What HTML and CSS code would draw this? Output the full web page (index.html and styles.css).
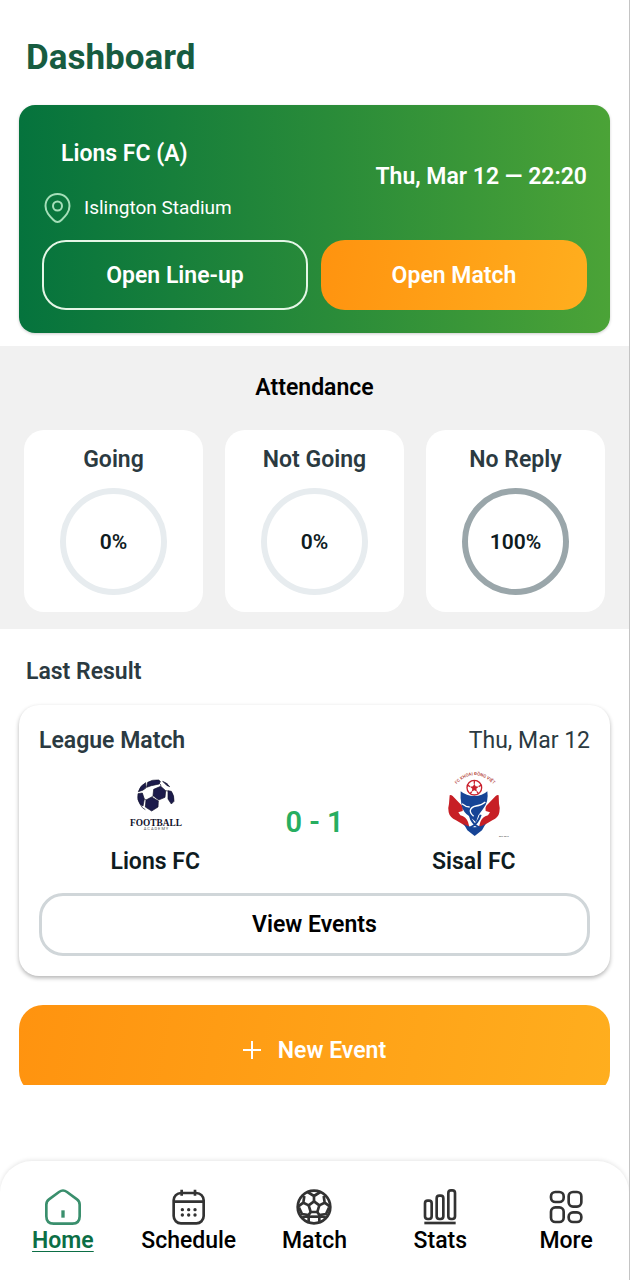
FILE: index.html
```html
<!DOCTYPE html>
<html lang="en">
<head>
    <meta charset="UTF-8">
    <meta name="viewport" content="width=device-width, initial-scale=1.0">
    <title>Dashboard</title>
    <link rel="stylesheet" href="styles.css">
</head>
<body>

    <main class="content">
        <h1 class="page-title">Dashboard</h1>

        <section class="match-card">
            <div class="match-info">
                <div>
                    <h2 class="match-team">Lions FC (A)</h2>
                    <p class="match-place">
                        <svg class="pin" viewBox="0 0 30 32" aria-hidden="true">
                            <path d="M15 2C8 2 3 7 3 14c0 6 4 10 8 14 2.500 2.500 5.500 2.500 8 0 4-4 8-8 8-14C27 7 22 2 15 2z"/>
                            <circle cx="15" cy="14" r="4.500"/>
                        </svg>
                        Islington Stadium
                    </p>
                </div>
                <time class="match-time">Thu, Mar 12 — 22:20</time>
            </div>
            <div class="match-actions">
                <button class="button outline">Open Line-up</button>
                <button class="button orange">Open Match</button>
            </div>
        </section>

        <section class="attendance">
            <h2 class="attendance-title">Attendance</h2>
            <div class="attendance-grid">
                <div class="attendance-card">
                    <h3 class="attendance-label">Going</h3>
                    <div class="ring">0%</div>
                </div>
                <div class="attendance-card">
                    <h3 class="attendance-label">Not Going</h3>
                    <div class="ring">0%</div>
                </div>
                <div class="attendance-card">
                    <h3 class="attendance-label">No Reply</h3>
                    <div class="ring full">100%</div>
                </div>
            </div>
        </section>

        <h2 class="section-title">Last Result</h2>

        <section class="result-card">
            <div class="result-head">
                <h3 class="result-type">League Match</h3>
                <time>Thu, Mar 12</time>
            </div>
            <div class="result-teams">
                <div class="team">
                    <svg class="team-logo" viewBox="27 9 216 210" role="img" aria-label="Lions FC logo">
                        <g fill="#1c1b4b" stroke="#11112b" stroke-width="2" stroke-linejoin="round">
                            <path d="M113 52q14-9 33-7l5 4-3 8-24 5-14 5z"/>
                            <path d="M107 53q-17 9-22 27l15-5 8-9z"/>
                            <path d="M84 86l13-2 6 18-4 21-8-4q-11-15-7-33z"/>
                            <path d="M131 73l21-9 15 13-2 20-19 8-17-13z"/>
                            <path d="M108 105l17-9 20 12-1 18-19 12-19-12z"/>
                            <path d="M174 77l10 2q9 12 8 30l-8 8-10-15z"/>
                            <path d="M158 49q13 4 21 16l-9-4z"/>
                        </g>
                        <path d="M104 73l5-6M103 102l6 3M126 96l4-5M151 57l2 7M167 77l7 1M92 121q5 9 14 13" fill="none" stroke="#11112b" stroke-width="2"/>
                        <text class="logo-name" x="138" y="182" text-anchor="middle">FOOTBALL</text>
                        <text class="logo-sub" x="138" y="196" text-anchor="middle">A C A D E M Y</text>
                    </svg>
                    <span class="team-name">Lions FC</span>
                </div>
                <strong class="score">0 - 1</strong>
                <div class="team">
                    <svg class="team-logo" viewBox="24 9 216 210" role="img" aria-label="Sisal FC logo">
                        <path id="arc" d="M80 57Q134 4 190 57" fill="none"/>
                        <text class="logo-arc"><textPath href="#arc" startOffset="50%" text-anchor="middle">FC KHOAI ĐỒNG VIỆT</textPath></text>
                        <circle cx="133" cy="68" r="22" fill="#fff" stroke="#c9202c" stroke-width="4"/>
                        <path d="M133 56l4 8 9 1-7 6 2 9-8-4-8 4 2-9-7-6 9-1z" fill="#c9202c"/>
                        <path d="M133 46v10M146 65l8-5M141 80l5 7M125 80l-5 7M120 65l-8-5" stroke="#c9202c" stroke-width="4"/>
                        <path d="M59 91q3-3 9 2l28 29q5 8 2 16l-13 4 6 9q18 5 23 20l6 22q-22-16-42-27-19-9-22-24-3-13 1-26z" fill="#c71f25"/>
                        <path d="M206 91q-3-3-9 2l-28 29q-5 8-2 16l13 4-6 9q-18 5-23 20l-6 22q22-16 42-27 19-9 21-24 3-13-1-26z" fill="#c71f25"/>
                        <path d="M92 79q17 14 41 14t39-14q5 32-13 53l-14 19-7 21-20-18q-18-12-23-32-5-22-3-43z" fill="#164496"/>
                        <path d="M100 175q11 11 34 12 22-1 34-12l-12 21-22 17-22-17z" fill="#164496"/>
                        <path d="M119 149q6 28 30 39M152 149q-7 27-32 39" fill="none" stroke="#164496" stroke-width="6"/>
                        <path d="M166 111q-11 10-28 12-15 3-17 13-1 8 10 18M96 116q12 10 23 10" fill="none" stroke="#fff" stroke-width="4"/>
                        <text class="logo-tiny" x="207" y="217">EST 2016</text>
                    </svg>
                    <span class="team-name">Sisal FC</span>
                </div>
            </div>
            <button class="button gray">View Events</button>
        </section>

        <button class="button orange new-event">
            <svg class="plus" viewBox="0 0 18 18" aria-hidden="true"><path d="M9 0v18M0 9h18"/></svg>
            New Event
        </button>
    </main>

    <nav class="tabbar">
        <a class="tab active" href="#home">
            <svg class="tab-icon" viewBox="0 0 108 108" aria-hidden="true">
                <path d="M4 47Q4 37 12 31L42 9Q54 0 66 9L96 31Q104 37 104 47V82Q104 104 82 104H26Q4 104 4 82z"/>
                <path class="door" d="M54 64v22"/>
            </svg>
            Home
        </a>
        <a class="tab" href="#schedule">
            <svg class="tab-icon" viewBox="0 0 108 108" aria-hidden="true">
                <rect x="8" y="12" width="90" height="91" rx="22"/>
                <path d="M8 38h90M32 2v18M72 2v18"/>
                <path class="dots" d="M34 62h.1M53 62h.1M72 62h.1M34 78h.1M53 78h.1M72 78h.1"/>
            </svg>
            Schedule
        </a>
        <a class="tab" href="#match">
            <svg class="tab-icon" viewBox="0 0 108 108" aria-hidden="true">
                <circle cx="54" cy="54" r="49"/>
                <path d="M54 37l16 12-6 20H44l-6-20z"/>
                <path d="M54 37V21L35 9M54 21L73 9M70 49l16-8-3-20M86 41l16 12M64 69l6 9 20-3 9-19M70 78v23M70 78l20 8M44 69l-6 9-20-3-9-19M38 78v23M38 78l-20 8M38 49l-16-8 3-20M22 41L6 53"/>
                <path d="M38 83h32"/>
            </svg>
            Match
        </a>
        <a class="tab" href="#stats">
            <svg class="tab-icon" viewBox="0 0 108 108" aria-hidden="true">
                <rect x="9" y="35" width="20" height="55" rx="8"/>
                <rect x="44" y="20" width="20" height="70" rx="8"/>
                <rect x="79" y="4" width="20" height="86" rx="8"/>
                <path d="M7 102h94"/>
            </svg>
            Stats
        </a>
        <a class="tab" href="#more">
            <svg class="tab-icon" viewBox="0 0 108 108" aria-hidden="true">
                <rect x="9" y="9" width="38" height="30" rx="13"/>
                <rect x="62" y="9" width="38" height="44" rx="13"/>
                <rect x="9" y="55" width="38" height="44" rx="13"/>
                <rect x="62" y="70" width="38" height="29" rx="13"/>
            </svg>
            More
        </a>
    </nav>

</body>
</html>
```

FILE: styles.css
```css
* {
    margin: 0;
    padding: 0;
    box-sizing: border-box;
}

body {
    display: flex;
    flex-direction: column;
    gap: 76px;
    height: 100vh;
    border-right: 1px solid #c4c4c4;
    background-color: #fff;
    font-family: Roboto, "Liberation Sans", sans-serif;
    font-size: 23px;
    line-height: 28px;
    color: #0f1c1f;
}

h2,
h3 {
    font-size: 23px;
    font-weight: 600;
}

.content {
    flex: 1;
    min-height: 0;
    overflow: hidden;
}

.page-title {
    padding: 36px 26px 25px;
    font-size: 35px;
    line-height: 44px;
    font-weight: 700;
    color: #175c40;
}

/* Next match */
.match-card {
    margin: 0 19px 13px;
    padding: 35px 23px 23px;
    border-radius: 16px;
    background: linear-gradient(90deg, #05733d, #298b39 52%, #4ba337);
    box-shadow: 0 1px 3px rgba(0, 0, 0, 0.2);
    color: #fff;
}

.match-info {
    display: flex;
    justify-content: space-between;
    align-items: center;
    margin-bottom: 16px;
}

.match-team {
    margin-bottom: 24px;
    padding-left: 19px;
}

.match-place {
    display: flex;
    align-items: center;
    gap: 11px;
    font-size: 19px;
}

.pin {
    width: 31px;
    height: 32px;
    fill: none;
    stroke: #a5dfb9;
    stroke-width: 2;
}

.match-time {
    padding-bottom: 10px;
    font-weight: 600;
}

.match-actions {
    display: grid;
    grid-template-columns: 1fr 1fr;
    gap: 13px;
}

.button {
    height: 70px;
    border: none;
    border-radius: 24px;
    font-family: inherit;
    font-size: 23px;
    font-weight: 600;
    color: #fff;
    cursor: pointer;
}

.button.outline {
    border: 2px solid #e4f6e6;
    background: none;
}

.button.orange {
    background: linear-gradient(100deg, #ff930f, #ffae1e);
}

.button.gray {
    width: 100%;
    height: 63px;
    border: 3px solid #d0d6d9;
    background-color: #fff;
    color: #000;
}

/* Attendance */
.attendance {
    padding: 28px 24px 17px;
    background-color: #f1f1f1;
}

.attendance-title {
    margin-bottom: 28px;
    text-align: center;
    color: #000;
}

.attendance-grid {
    display: grid;
    grid-template-columns: repeat(3, 1fr);
    gap: 22px;
}

.attendance-card {
    display: flex;
    flex-direction: column;
    align-items: center;
    gap: 14px;
    padding: 16px 0 17px;
    border-radius: 20px;
    background-color: #fff;
}

.attendance-label,
.section-title,
.result-type {
    color: #2b3a41;
}

.ring {
    display: flex;
    justify-content: center;
    align-items: center;
    width: 107px;
    height: 107px;
    border: 6px solid #e7ecef;
    border-radius: 50%;
    font-size: 21px;
    font-weight: 600;
}

.ring.full {
    border-color: #9aa6aa;
}

/* Last result */
.section-title {
    padding: 29px 26px 19px;
}

.result-card {
    margin: 0 19px 29px;
    padding: 22px 20px 20px;
    border-radius: 20px;
    background-color: #fff;
    box-shadow: 0 2px 4px rgba(0, 0, 0, 0.3);
}

.result-head {
    display: flex;
    justify-content: space-between;
    color: #2b3a41;
}

.result-teams {
    display: grid;
    grid-template-columns: 1fr auto 1fr;
    column-gap: 14px;
    align-items: center;
    margin: 13px 0 17px;
}

.team {
    display: flex;
    flex-direction: column;
    align-items: center;
    gap: 10px;
}

.team-logo {
    width: 72px;
    height: 70px;
}

.team-name {
    font-weight: 600;
}

.score {
    font-size: 29px;
    font-weight: 600;
    color: #27ae60;
}

.logo-name {
    font-family: "Liberation Serif", serif;
    font-size: 28px;
    font-weight: bold;
    fill: #11112b;
}

.logo-sub {
    font-size: 12px;
    fill: #555;
}

.logo-arc {
    font-size: 13px;
    font-weight: 600;
    fill: #b5493f;
}

.logo-tiny {
    font-size: 7px;
    fill: #333;
}

.new-event {
    display: flex;
    justify-content: center;
    align-items: center;
    gap: 17px;
    width: calc(100% - 38px);
    height: 90px;
    margin: 0 19px;
}

.plus {
    width: 18px;
    height: 18px;
    fill: none;
    stroke: #fff;
    stroke-width: 2;
}

/* Bottom tabs */
.tabbar {
    display: grid;
    grid-template-columns: repeat(5, 1fr);
    padding: 28px 0 25px;
    border-radius: 32px 32px 0 0;
    background-color: #fff;
    box-shadow: 0 -1px 4px rgba(0, 0, 0, 0.1);
}

.tab {
    display: flex;
    flex-direction: column;
    align-items: center;
    gap: 2px;
    font-weight: 500;
    text-decoration: none;
    color: #000;
}

.tab.active {
    font-weight: 600;
    text-decoration: underline;
    text-decoration-thickness: 1px;
    text-underline-offset: 3px;
    color: #0b6e45;
}

.tab-icon {
    width: 36px;
    height: 36px;
    fill: none;
    stroke: #333;
    stroke-width: 8;
}

.active .tab-icon {
    stroke: #3a8f6d;
}

.door,
.dots {
    stroke-width: 10;
}

.dots {
    stroke-linecap: round;
}
```
